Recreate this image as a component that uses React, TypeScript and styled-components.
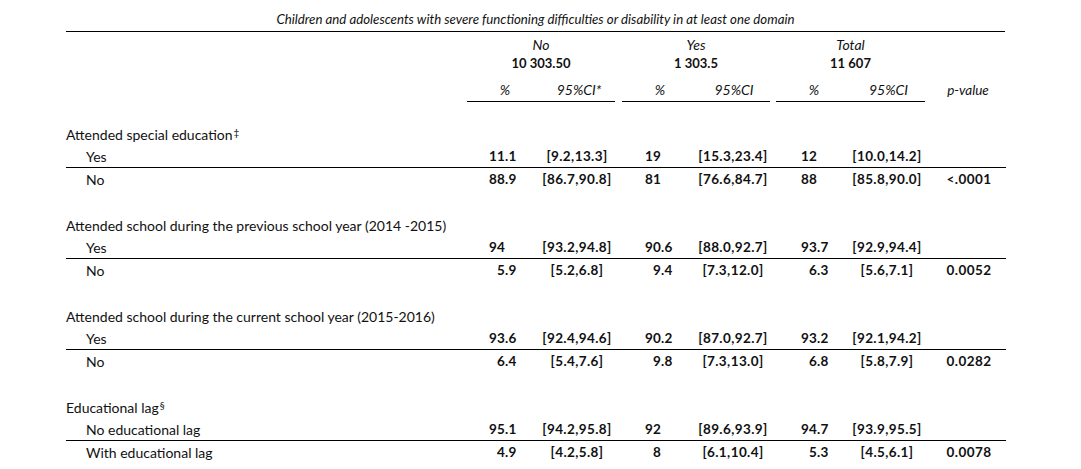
import React from "react";
import styled, {createGlobalStyle} from "styled-components";

const GlobalStyle = createGlobalStyle`
  html, body {
    margin: 0;
    padding: 0;
    background: #fff;
  }
  body {
    font-family: Lato, "Open Sans", sans-serif;
    color: #111;
  }
`;

// column widths of a data row, from x=66 to x=1006
const COLS = "401px 73px 74px 81px 76px 79px 74px 82px";

const Page = styled.div`
  width: 1081px;
  height: 469px;
  padding-left: 66px;
  box-sizing: border-box;
  overflow: hidden;
`;

const Caption = styled.div`
  width: 939px;
  padding: 10px 0 3px;
  text-align: center;
  font-style: italic;
  font-size: 13.25px;
  line-height: 18px;
  border-bottom: 1px solid #000;
`;

const HeadGrid = styled.div`
  display: grid;
  grid-template-columns: 401px 148px 7px 148px 6px 149px 80px;
  align-items: end;
`;

const Group = styled.div`
  display: flex;
  flex-direction: column;
  text-align: center;
`;

const GroupName = styled.div`
  padding-top: 4px;
  font-style: italic;
  font-size: 14px;
  line-height: 18px;
`;

const GroupCount = styled.div`
  font-size: 13px;
  font-weight: 700;
  line-height: 18px;
`;

const SubRow = styled.div`
  display: grid;
  grid-template-columns: 76px 1fr;
  padding: 9px 0 2px;
  border-bottom: 1px solid #000;
`;

const SubCell = styled.div`
  font-style: italic;
  font-size: 14px;
  line-height: 18px;
  text-align: center;
  white-space: nowrap;
`;

const PHead = styled(SubCell)`
  font-size: 13.5px;
  padding: 0 0 3px 6px;
`;

const Body = styled.div`
  padding-top: 21px;
  display: flex;
  flex-direction: column;
  gap: 24px;
`;

const Block = styled.div`
  display: flex;
  flex-direction: column;
`;

const Row = styled.div<{ $ruled?: boolean }>`
  display: grid;
  grid-template-columns: ${COLS};
  width: 940px;
  height: 22px;
  align-items: center;
  font-size: 14px;
  border-bottom: ${p => (p.$ruled ? "1px solid #000" : "none")};
`;

const Label = styled.div<{ $indent?: boolean }>`
  padding-left: ${p => (p.$indent ? 20 : 0)}px;
  white-space: nowrap;
`;

const Sup = styled.sup`
  font-size: 10px;
  vertical-align: 4px;
  line-height: 0;
  margin-left: 1px;
`;

const Num = styled.div`
  display: flex;
  font-size: 13.5px;
  font-weight: 700;
  letter-spacing: 0.2px;
`;

const Int = styled.span<{ $w: number }>`
  width: ${p => p.$w}px;
  text-align: right;
`;

const Center = styled.div<{ $pad?: number }>`
  text-align: center;
  font-size: 13.5px;
  font-weight: 700;
  letter-spacing: 0.4px;
  white-space: nowrap;
  padding-left: ${p => (p.$pad ?? 0)}px;
`;

const INT_W = [38, 47, 46];

const Dec = ({value, col}: { value: string; col: number }) => {
  const [i, f] = value.split(".");
  return <Num>
    <Int $w={INT_W[col]}>{i}</Int>
    <span>{f !== undefined ? "." + f : ""}</span>
  </Num>;
};

interface DataLine {
  label: string;
  v: [string, string, string, string, string, string];
  p?: string;
}

interface Section {
  title: string;
  mark?: string;
  rows: [DataLine, DataLine];
}

const sections: Section[] = [
  {
    title: "Attended special education", mark: "‡", rows: [
      {label: "Yes", v: ["11.1", "[9.2,13.3]", "19", "[15.3,23.4]", "12", "[10.0,14.2]"]},
      {label: "No", v: ["88.9", "[86.7,90.8]", "81", "[76.6,84.7]", "88", "[85.8,90.0]"], p: "<.0001"},
    ]
  },
  {
    title: "Attended school during the previous school year (2014 -2015)", rows: [
      {label: "Yes", v: ["94", "[93.2,94.8]", "90.6", "[88.0,92.7]", "93.7", "[92.9,94.4]"]},
      {label: "No", v: ["5.9", "[5.2,6.8]", "9.4", "[7.3,12.0]", "6.3", "[5.6,7.1]"], p: "0.0052"},
    ]
  },
  {
    title: "Attended school during the current school year (2015-2016)", rows: [
      {label: "Yes", v: ["93.6", "[92.4,94.6]", "90.2", "[87.0,92.7]", "93.2", "[92.1,94.2]"]},
      {label: "No", v: ["6.4", "[5.4,7.6]", "9.8", "[7.3,13.0]", "6.8", "[5.8,7.9]"], p: "0.0282"},
    ]
  },
  {
    title: "Educational lag", mark: "§", rows: [
      {label: "No educational lag", v: ["95.1", "[94.2,95.8]", "92", "[89.6,93.9]", "94.7", "[93.9,95.5]"]},
      {label: "With educational lag", v: ["4.9", "[4.2,5.8]", "8", "[6.1,10.4]", "5.3", "[4.5,6.1]"], p: "0.0078"},
    ]
  },
];

const groups = [
  {name: "No", count: "10 303.50", ci: "95%CI*"},
  {name: "Yes", count: "1 303.5", ci: "95%CI"},
  {name: "Total", count: "11 607", ci: "95%CI"},
];

const DataRow = ({line, ruled}: { line: DataLine; ruled?: boolean }) => <Row $ruled={ruled}>
  <Label $indent>{line.label}</Label>
  <Dec value={line.v[0]} col={0}/>
  <Center>{line.v[1]}</Center>
  <Dec value={line.v[2]} col={1}/>
  <Center>{line.v[3]}</Center>
  <Dec value={line.v[4]} col={2}/>
  <Center>{line.v[5]}</Center>
  <Center $pad={8}>{line.p ?? ""}</Center>
</Row>;

export default function App() {
  return <Page>
    <GlobalStyle/>
    <Caption>Children and adolescents with severe functioning difficulties or disability in at least one domain</Caption>
    <HeadGrid>
      <div/>
      {groups.map((g, i) => <React.Fragment key={g.name}>
        {i > 0 && <div/>}
        <Group>
          <GroupName>{g.name}</GroupName>
          <GroupCount>{g.count}</GroupCount>
          <SubRow>
            <SubCell>%</SubCell>
            <SubCell>{g.ci}</SubCell>
          </SubRow>
        </Group>
      </React.Fragment>)}
      <PHead>p-value</PHead>
    </HeadGrid>
    <Body>
      {sections.map(s => <Block key={s.title}>
        <Row>
          <Label>{s.title}{s.mark && <Sup>{s.mark}</Sup>}</Label>
        </Row>
        <DataRow line={s.rows[0]} ruled/>
        <DataRow line={s.rows[1]}/>
      </Block>)}
    </Body>
  </Page>;
}
